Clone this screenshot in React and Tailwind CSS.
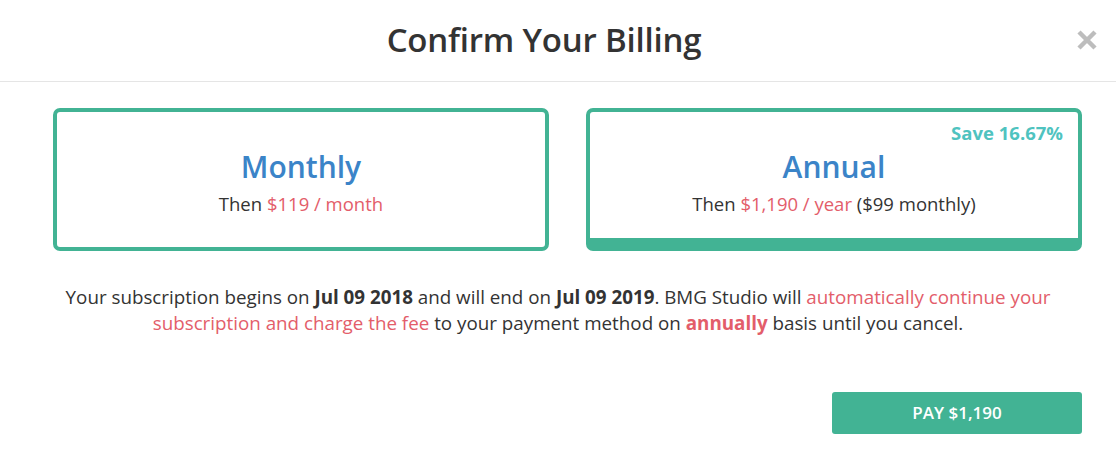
export default function App() {
  return (
    <div className="w-[1116px] h-[468px] bg-white" style={{ fontFamily: '"Open Sans", sans-serif' }}>
      <div className="relative h-[82px] border-b border-[#e5e5e5] flex items-center justify-center">
        <h1 className="mr-[28px] text-[33px] font-semibold text-[#333] tracking-[-0.2px] leading-none -mt-[2px]">Confirm Your Billing</h1>
        <svg className="absolute left-[1076px] top-[29px]" width="22" height="22" viewBox="0 0 22 22">
          <path d="M3 3 L19 19 M19 3 L3 19" stroke="#bdbdbd" strokeWidth="4.5" strokeLinecap="butt" />
        </svg>
      </div>
      <div className="flex gap-[37px] pl-[53px] pr-[34px] pt-[26px]">
        <div className="shrink-0 w-[496px] h-[143px] border-[4px] border-[#42b394] rounded-[7px] flex flex-col items-center pt-[36px]">
          <div className="text-[30px] font-semibold text-[#3b84c8] leading-[38px]">Monthly</div>
          <div className="text-[18.5px] text-[#333] mt-[6px] leading-[24px]">Then <span className="text-[#e35d6a]">$119 / month</span></div>
        </div>
        <div className="shrink-0 relative w-[496px] h-[143px] border-[4px] border-b-[13px] border-[#42b394] rounded-[7px] flex flex-col items-center pt-[36px]">
          <div className="absolute right-[15px] top-[9px] text-[18.5px] font-bold text-[#4fc3bf] leading-[24px]">Save 16.67%</div>
          <div className="text-[30px] font-semibold text-[#3b84c8] leading-[38px]">Annual</div>
          <div className="text-[18.5px] text-[#333] mt-[6px] leading-[24px]">Then <span className="text-[#e35d6a]">$1,190 / year</span> ($99 monthly)</div>
        </div>
      </div>
      <p className="mt-[33px] px-[56px] text-center text-[18.8px] leading-[26px] text-[#333]">
        Your subscription begins on <b>Jul 09 2018</b> and will end on <b>Jul 09 2019</b>. BMG Studio will <span className="text-[#e35d6a]">automatically continue your</span> <span className="text-[#e35d6a]">subscription and charge the fee</span> to your payment method on <b className="text-[#e35d6a]">annually</b> basis until you cancel.
      </p>
      <div className="flex justify-end pr-[34px] mt-[56px]">
        <button className="w-[250px] h-[42px] bg-[#42b394] rounded-[3px] text-white text-[17px] font-semibold">PAY $1,190</button>
      </div>
    </div>
  );
}
